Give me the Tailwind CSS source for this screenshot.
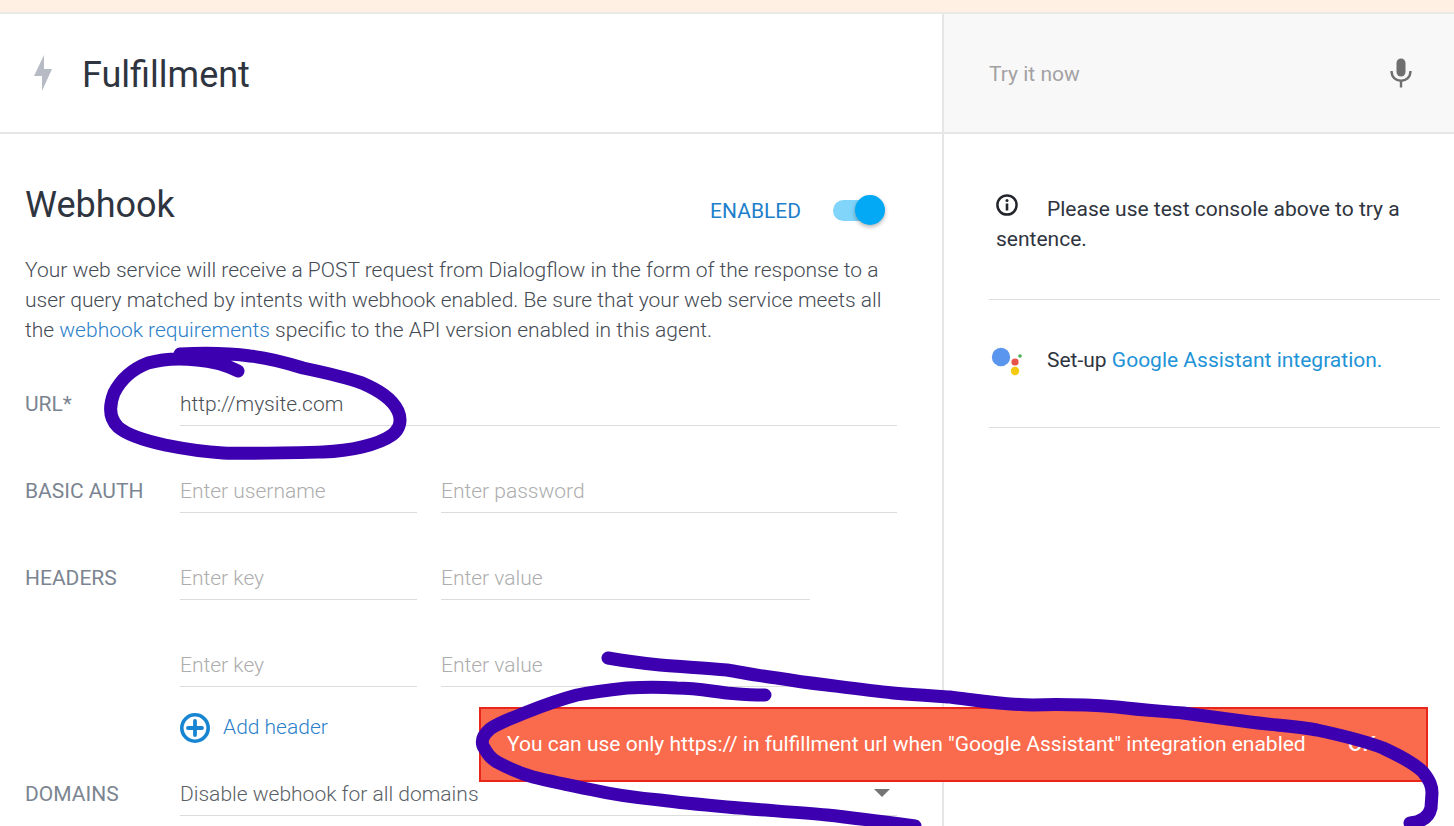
<!DOCTYPE html>
<html>
<head>
<meta charset="utf-8">
<script src="https://cdn.jsdelivr.net/npm/@tailwindcss/browser@4"></script>
</head>
<body class="bg-white">
<div class="relative w-[1454px] h-[826px] overflow-hidden bg-white font-['Roboto',sans-serif] text-[#2f3540]">
  <div class="h-[14px] bg-[#fff0e3] border-b-2 border-[#ebe9e6]"></div>

  <div class="flex h-[120px] border-b-2 border-[#e6e6e6]">
    <div class="w-[944px] shrink-0 border-r-2 border-[#e6e6e6] flex items-center pl-[33px] gap-[38px]">
      <svg width="20" height="37" viewBox="0 0 20 37" class="shrink-0 mt-[1px]"><path d="M11 0 L1 21 L9 21 L9 36 L19 14 L11 14 Z" fill="#b7bbc4"/></svg>
      <h1 class="text-[36px] leading-none font-normal text-[#2f3540] -ml-[9px] mt-[3px]">Fulfillment</h1>
    </div>
    <div class="flex-1 bg-[#f8f8f8] flex items-center justify-between pl-[45px] pr-[42px]">
      <span class="text-[21px] text-[#a3a1a3] mt-[3px]">Try it now</span>
      <svg width="22" height="30" viewBox="0 0 22 30"><rect x="6.5" y="0.5" width="9" height="18" rx="4.5" fill="#6f6f6f"/><path d="M1.5 13 C1.5 26 20.5 26 20.5 13" fill="none" stroke="#6f6f6f" stroke-width="2.4"/><rect x="9.8" y="22" width="2.4" height="7.5" fill="#6f6f6f"/></svg>
    </div>
  </div>

  <div class="flex h-[692px]">
    <div class="w-[944px] shrink-0 border-r-2 border-[#e6e6e6] pl-[25px] pr-[45px]">
      <div class="flex items-center justify-between h-[44px] mt-[49px] pr-[12px]">
        <h2 class="text-[36px] leading-none font-normal">Webhook</h2>
        <div class="flex items-center gap-[32px] mt-[10px]">
          <span class="text-[21px] text-[#1f7fcb] mt-[3px]">ENABLED</span>
          <div class="relative w-[52px] h-[21px]">
            <div class="w-[36px] h-[21px] rounded-full bg-[#81d4fa]"></div>
            <div class="absolute right-0 top-[-5px] w-[30px] h-[30px] rounded-full bg-[#03a9f4] shadow-[0_2px_4px_rgba(0,0,0,0.3)]"></div>
          </div>
        </div>
      </div>
      <p class="mt-[28px] text-[21px] leading-[30px] text-[#454b54] font-light">Your web service will receive a POST request from Dialogflow in the form of the response to a user query matched by intents with webhook enabled. Be sure that your web service meets all the <a class="text-[#2c7fc9]">webhook requirements</a> specific to the API version enabled in this agent.</p>

      <div class="mt-[29px] flex flex-col">
        <div class="flex h-[87px]">
          <div class="w-[155px] pt-[15px] text-[21px] leading-[30px] text-[#7b8591]">URL*</div>
          <div class="w-[717px] h-[52px] border-b border-[#dcdcdc] pt-[15px] text-[21px] leading-[30px] text-[#4a4f55] font-light">http://mysite.com</div>
        </div>
        <div class="flex h-[87px]">
          <div class="w-[155px] pt-[15px] text-[21px] leading-[30px] text-[#7b8591]">BASIC AUTH</div>
          <div class="w-[237px] h-[52px] border-b border-[#dcdcdc] pt-[15px] text-[21px] leading-[30px] text-[#adadad] font-light">Enter username</div>
          <div class="w-[456px] ml-[24px] h-[52px] border-b border-[#dcdcdc] pt-[15px] text-[21px] leading-[30px] text-[#adadad] font-light">Enter password</div>
        </div>
        <div class="flex h-[87px]">
          <div class="w-[155px] pt-[15px] text-[21px] leading-[30px] text-[#7b8591]">HEADERS</div>
          <div class="w-[237px] h-[52px] border-b border-[#dcdcdc] pt-[15px] text-[21px] leading-[30px] text-[#adadad] font-light">Enter key</div>
          <div class="w-[369px] ml-[24px] h-[52px] border-b border-[#dcdcdc] pt-[15px] text-[21px] leading-[30px] text-[#adadad] font-light">Enter value</div>
        </div>
        <div class="flex h-[72px]">
          <div class="w-[155px]"></div>
          <div class="w-[237px] h-[52px] border-b border-[#dcdcdc] pt-[15px] text-[21px] leading-[30px] text-[#adadad] font-light">Enter key</div>
          <div class="w-[369px] ml-[24px] h-[52px] border-b border-[#dcdcdc] pt-[15px] text-[21px] leading-[30px] text-[#adadad] font-light">Enter value</div>
        </div>
        <div class="flex h-[42px] items-center pl-[155px] gap-[13px]">
          <svg width="30" height="30" viewBox="0 0 30 30"><circle cx="15" cy="15" r="13.2" fill="none" stroke="#1785d2" stroke-width="3.6"/><path d="M15 8v14M8 15h14" stroke="#1785d2" stroke-width="3.8" stroke-linecap="round"/></svg>
          <span class="text-[21px] text-[#2c7fc9] font-light">Add header</span>
        </div>
        <div class="flex mt-[27px] h-[40px]">
          <div class="w-[155px] pt-[3px] text-[21px] leading-[30px] text-[#7b8591]">DOMAINS</div>
          <div class="w-[717px] h-[40px] border-b border-[#dcdcdc] pt-[3px] text-[21px] leading-[30px] text-[#5a5f66] font-light flex justify-between pr-[7px]">
            <span>Disable webhook for all domains</span>
            <svg width="16" height="8" viewBox="0 0 16 8" class="mt-[10px]"><path d="M0 0h16L8 8z" fill="#757575"/></svg>
          </div>
        </div>
      </div>
    </div>

    <div class="flex-1 pl-[45px] pr-[14px]">
      <div class="h-[166px] border-b border-[#dedede] pt-[59px]">
        <p class="text-[21px] leading-[30px] text-[#2f3540] pl-[7px] font-normal">
          <svg width="24" height="24" viewBox="0 0 24 24" class="inline-block align-[-1px] mr-[28px] -ml-[1px]"><circle cx="12" cy="12" r="9.6" fill="none" stroke="#22262c" stroke-width="2.5"/><circle cx="12" cy="7.6" r="1.5" fill="#22262c"/><rect x="10.7" y="10.5" width="2.6" height="7" fill="#22262c"/></svg>Please use test console above to try a sentence.
        </p>
      </div>
      <div class="h-[128px] border-b border-[#dedede] flex items-start pt-[45px]">
        <svg width="36" height="34" viewBox="0 0 36 34" class="shrink-0 mt-[2px]"><circle cx="12" cy="10" r="9.2" fill="#5a96ee"/><circle cx="26" cy="15" r="3.6" fill="#e8534a"/><circle cx="26" cy="24" r="4.2" fill="#f4c911"/><circle cx="31" cy="9" r="1.8" fill="#4caf50"/></svg>
        <p class="text-[21px] leading-[30px] text-[#2f3540] ml-[22px]">Set-up <a class="text-[#2293d6]">Google Assistant integration.</a></p>
      </div>
    </div>
  </div>

  <div class="absolute left-[479px] top-[707px] w-[949px] h-[75px] bg-[#fa6a4c] border-2 border-[#e8261e] flex items-center pl-[26px] text-white text-[21px] font-normal">
    <span class="w-[841px] shrink-0 whitespace-nowrap">You can use only https:// in fulfillment url when "Google Assistant" integration enabled</span>
    <span class="font-medium">OK</span>
  </div>

  <svg class="absolute inset-0 pointer-events-none" width="1454" height="826" viewBox="0 0 1454 826" fill="none" stroke="#3c00b0" stroke-linecap="round" stroke-linejoin="round">
    <path stroke-width="13" d="M238 371 C228 366 212 361 197 360 C180 358 162 359 148 363 C130 370 120 381 114 393 C109 406 109 418 118 427 C128 436 147 441 165 445 C185 449 205 452 223 453 C250 454 285 453 323 452 C350 451 378 445 392 435 C400 429 402 420 398 411 C392 398 378 390 362 383 C345 377 322 372 303 368 C287 363 270 358 250 356 C228 353 200 353 180 354"/>
    <path stroke-width="13" d="M608 658 C625 661 640 663 660 665 C685 667 705 668 727 670 C745 673 760 676 777 678 C795 681 810 683 827 685 C850 688 872 691 893 693 C915 695 935 696 950 697 C975 700 1005 705 1033 705 C1060 704 1090 705 1117 707 C1140 710 1160 711 1183 713 C1205 716 1228 719 1250 722 C1272 725 1295 726 1317 730 C1340 735 1365 741 1383 748 C1400 756 1414 763 1423 772 C1430 781 1432 786 1432 793 L1431 808 C1429 817 1422 822 1410 823"/>
    <path stroke-width="13" d="M765 695 C750 695 740 694 727 693 C710 691 695 688 677 688 C660 687 645 687 627 688 C608 690 592 692 577 695 C558 700 542 706 527 712 C510 719 498 723 490 729 C483 735 481 740 483 746 C487 753 490 758 497 762 C510 769 522 774 533 777 C553 782 573 786 593 790 C615 795 638 798 660 800 C683 803 705 805 727 807 C760 810 795 812 827 815 C855 818 885 822 915 826"/>
  </svg>
</div>
</body>
</html>
